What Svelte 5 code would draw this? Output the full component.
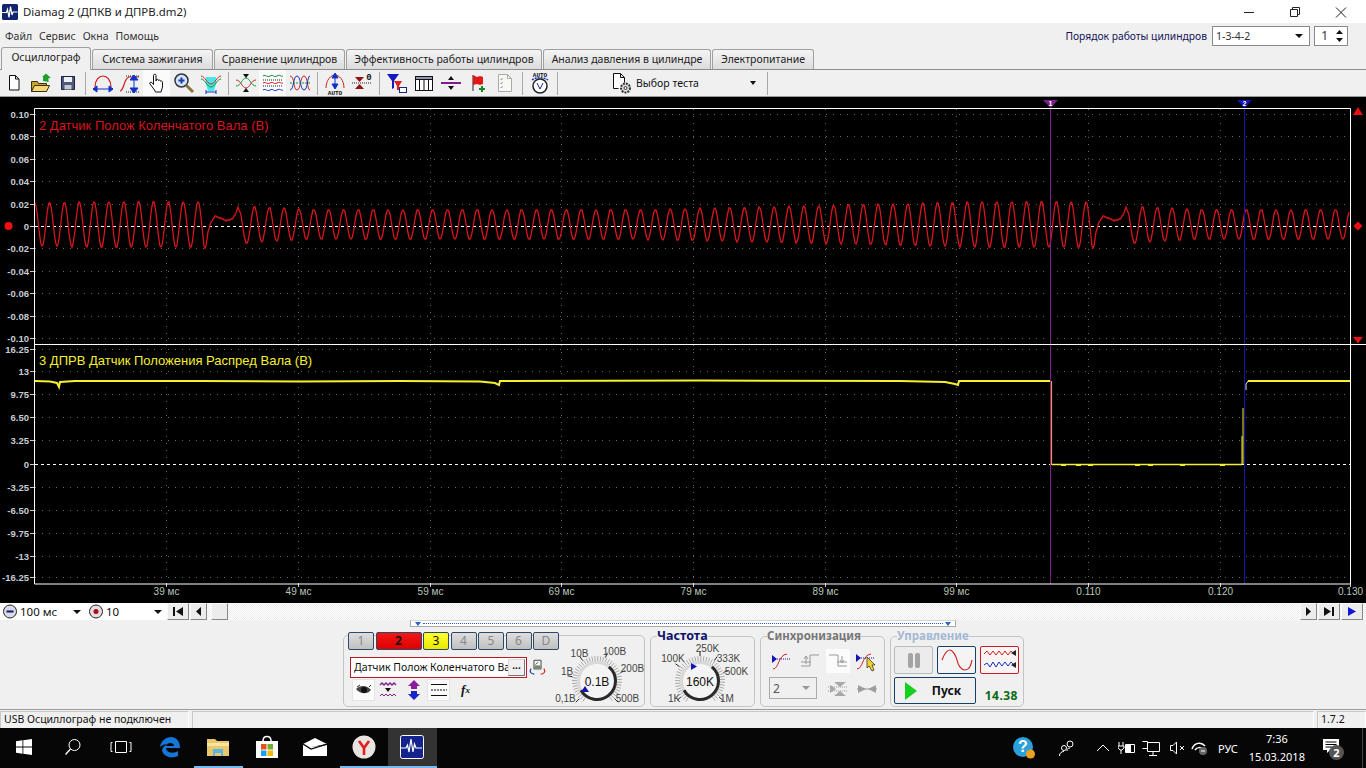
<script>
  const tabs = [
    { label: "Осциллограф", w: 90, active: true },
    { label: "Система зажигания", w: 121 },
    { label: "Сравнение цилиндров", w: 131 },
    { label: "Эффективность работы цилиндров", w: 196 },
    { label: "Анализ давления в цилиндре", w: 168 },
    { label: "Электропитание", w: 102 },
  ];
  const channels = [
    { t: "1", w: 26 }, { t: "2", w: 46, c: "red" }, { t: "3", w: 26, c: "yellow" },
    { t: "4", w: 26 }, { t: "5", w: 26 }, { t: "6", w: 26 }, { t: "D", w: 26 },
  ];

  const gridX = [166, 298, 430, 561, 693, 825, 956, 1088, 1220];
  const bottomLabels = ["39 мс", "49 мс", "59 мс", "69 мс", "79 мс", "89 мс", "99 мс", "0.110", "0.120", "0.130"];
  const upper = [
    ["0.10", 114], ["0.08", 136], ["0.06", 159], ["0.04", 181], ["0.02", 204], ["0", 226],
    ["-0.02", 248], ["-0.04", 271], ["-0.06", 293], ["-0.08", 316], ["-0.10", 338],
  ];
  const lower = [
    ["16.25", 349], ["13", 371], ["9.75", 394], ["6.50", 417], ["3.25", 440], ["0", 464],
    ["-3.25", 487], ["-6.50", 510], ["-9.75", 533], ["-13", 556], ["-16.25", 577],
  ];

  // hump between two crank teeth gaps
  const knots = [
    [0, 246], [1.5, 249], [4, 232], [7, 222], [11, 216], [16, 218], [22, 220.5], [28, 219],
    [32, 213], [34, 207], [37, 215], [40, 235], [43, 247],
  ];
  const cycle = 888;
  const clamp = (v) => Math.max(0, Math.min(1, v));

  function crank(x) {
    const u = (((x - 204) % cycle) + cycle) % cycle;
    if (u < 43) {
      let i = 0;
      while (knots[i + 1][0] < u) i++;
      const [a, ya] = knots[i];
      const [b, yb] = knots[i + 1];
      return ya + ((yb - ya) * (u - a)) / (b - a);
    }
    const p = u - 43;
    const amp = 15 + 8 * clamp((p - 400) / 350) + 3 * clamp(1 - p / 60);
    return 224.5 + amp * Math.cos((2 * Math.PI * p) / (845 / 56.9));
  }

  let redPts = "";
  for (let x = 35; x < 1350; x++) redPts += `${x},${Math.round(crank(x))} `;

  const yellowPts =
    "35,381 50,381.5 57,383 59,387 60,382 75,381 200,381 300,381.5 400,381 480,381.5 495,383 499,385 500,381 " +
    "700,380.5 900,381 945,382 955,384 958,385 959,381 1000,381 1051,381";

  const polar = (cx, cy, r, deg) => {
    const a = (deg * Math.PI) / 180;
    return [cx + r * Math.cos(a), cy + r * Math.sin(a)];
  };
  function hatch(cx, cy, r1, r2) {
    const out = [];
    for (let d = 125; d <= 415; d += 7) out.push([polar(cx, cy, r1, d), polar(cx, cy, r2, d)]);
    return out;
  }
  const arc = (cx, cy, r, a, b) => {
    const [x1, y1] = polar(cx, cy, r, a);
    const [x2, y2] = polar(cx, cy, r, b);
    return `M${x1} ${y1}A${r} ${r} 0 ${b - a > 180 ? 1 : 0} 1 ${x2} ${y2}`;
  };

  const voltLabels = [
    ["10В", 32.5, 18, 235], ["100В", 67.5, 16, 290], ["1В", 20, 36, 190],
    ["200В", 85.5, 33, 340], ["0,1В", 18.5, 63, 135], ["500В", 80.5, 63, 45],
  ];
  const freqLabels = [
    ["100K", 23, 23, 215], ["250K", 57.5, 13, 270], ["333K", 78.5, 23, 305],
    ["500K", 86.5, 36, 340], ["1K", 24, 63, 140], ["1M", 77, 63, 40],
  ];
</script>

{#snippet dial(labels, value, tri)}
  <svg class="dial" width="100" height="72" viewBox="0 0 100 72">
    {#each hatch(50, 46, 20, 25) as [a, b]}
      <line x1={a[0]} y1={a[1]} x2={b[0]} y2={b[1]} stroke="#a8a8a8" stroke-width="1" />
    {/each}
    {#each labels as [t, x, y, deg]}
      {@const p = polar(50, 46, 25, deg)}
      {@const q = polar(50, 46, 30, deg)}
      <line x1={p[0]} y1={p[1]} x2={q[0]} y2={q[1]} stroke="#222" />
      <text {x} y={y + 3.5} text-anchor="middle" class="dial-label">{t}</text>
    {/each}
    <circle cx="50" cy="46" r="18.5" fill="#f4f4f4" stroke="#d8d8d8" stroke-width="3" />
    <path d={arc(50, 46, 18.5, -50, 150)} fill="none" stroke="#2a2a2a" stroke-width="3" />
    <path d={tri} fill="#1414b4" />
    <text x="50" y="50.5" text-anchor="middle" class="dial-value">{value}</text>
  </svg>
{/snippet}

<div class="app">
  <header class="title">
    <svg class="logo" width="16" height="16" viewBox="0 0 16 16">
      <rect width="16" height="16" rx="1.5" fill="#12246e" />
      <path d="M0 8.500h4.500l1-3 1.500 8 1.500-11 1.500 8.500 1-3h4.500" fill="none" stroke="#fff" stroke-width="1.200" />
    </svg>
    <span class="title-text">Diamag 2 (ДПКВ и ДПРВ.dm2)</span>
    <div class="win-btns">
      <svg width="46" height="20" viewBox="0 0 46 20"><path d="M18 10.500h10" stroke="#222" /></svg>
      <svg width="46" height="20" viewBox="0 0 46 20"><path d="M18.500 7.500h7v7h-7zM20.500 7.500v-2h7v7h-2" fill="none" stroke="#222" /></svg>
      <svg width="46" height="20" viewBox="0 0 46 20"><path d="M18 5.500l10 10M28 5.500l-10 10" stroke="#222" /></svg>
    </div>
  </header>

  <div class="menu">
    <span>Файл</span><span>Сервис</span><span>Окна</span><span>Помощь</span>
    <div class="order">
      <span class="order-label">Порядок работы цилиндров</span>
      <div class="box order-select"><span>1-3-4-2</span><i class="caret"></i></div>
      <div class="box order-spin">
        <span>1</span>
        <svg width="9" height="14" viewBox="0 0 9 14"><path d="M1 5l3.500-4 3.500 4zM1 9l3.500 4 3.500-4z" fill="#111" /></svg>
      </div>
    </div>
  </div>

  <nav class="tabs">
    {#each tabs as tab}
      <div class="tab" class:active={tab.active} style="width:{tab.w}px">{tab.label}</div>
    {/each}
  </nav>

  <div class="toolbar">
    <div class="tool"><svg width="22" height="22" viewBox="0 0 22 22"><path d="M6.500 3.500h6l3.500 3.500v11h-9.500zM12.500 3.500v3.500h3.500" fill="#fff" stroke="#111" /></svg></div>
    <div class="tool"><svg width="24" height="22" viewBox="0 0 24 22"><path d="M2.500 9.500h6l1 2h8v8h-15z" fill="#c9a22e" stroke="#3a3010" /><path d="M2.500 19.500l3-6h15l-3 6z" fill="#f5d873" stroke="#3a3010" /><path d="M14 9V5h-1l4-3.500 5 4.500h-2.500v4z" fill="#1fa02c" /></svg></div>
    <div class="tool"><svg width="20" height="20" viewBox="0 0 20 20"><path d="M3.500 3.500h13v13h-13z" fill="#4d5a7c" stroke="#1b2038" /><path d="M6 4h8v5H6z" fill="#eef0f4" /><path d="M6.500 12h7v4.500h-7z" fill="#c4c8d0" /></svg></div>
    <i class="sep"></i>
    <div class="tool"><svg width="24" height="22" viewBox="0 0 24 22"><path d="M4 15c0-7 4-11 8-11s8 4 8 11" fill="none" stroke="#d01818" stroke-width="1.200" /><path d="M2 17h20M2 17l4-3v6zM22 17l-4-3v6z" fill="#1030c8" stroke="#1030c8" /></svg></div>
    <div class="tool"><svg width="24" height="22" viewBox="0 0 24 22"><path d="M2 19c4 0 4-13 9-14h10" fill="none" stroke="#d01818" stroke-width="1.200" stroke-dasharray="12 0" /><path d="M8 4h14M8 20h14" stroke="#222" stroke-dasharray="1 1" /><path d="M16 5v14M16 3l-4 5h8zM16 21l-4-5h8z" fill="#1030c8" stroke="#1030c8" /></svg></div>
    <div class="tool on"><svg width="22" height="24" viewBox="0 0 22 24"><path d="M8.500 19l-4.500-6c-.8-1.500 1-2.500 2-1.300l1.500 1.800V4.500c0-1.700 2.500-1.700 2.500 0V10l.5-1.500c1.500-.5 2 .2 2 1 1-.8 2-.3 2 .7 1-.5 2 .1 2 1V16l-1.500 5H9.500z" fill="#fff" stroke="#111" /></svg></div>
    <div class="tool"><svg width="24" height="24" viewBox="0 0 24 24"><circle cx="9.500" cy="9.500" r="6.500" fill="#d4e4f4" stroke="#334" stroke-width="1.500" /><path d="M6.500 9.500h6M9.500 6.500v6" stroke="#1a3cb0" stroke-width="2" /><path d="M14.500 14.500l6.500 6.500" stroke="#8a7238" stroke-width="3" /></svg></div>
    <div class="tool"><svg width="24" height="22" viewBox="0 0 24 22"><path d="M7 5h10v7l-2 7H9l-2-7z" fill="#48e8e8" /><path d="M2 4c4 0 6 8 10 8s6-8 10-8" fill="none" stroke="#d02020" /><path d="M2 7c4 0 6 8 10 8s6-8 10-8" fill="none" stroke="#108a30" /><path d="M7 20h10M7 18v4M17 18v4" stroke="#1030c8" /></svg></div>
    <i class="sep"></i>
    <div class="tool"><svg width="24" height="22" viewBox="0 0 24 22"><path d="M2 8c5 0 6 8 10 8s5-8 10-8" fill="none" stroke="#d02020" /><path d="M2 14c5 0 6-8 10-8s5 8 10 8" fill="none" stroke="#10a030" /><path d="M9 2h6l-3 4zM9 20h6l-3-4z" fill="#111" /></svg></div>
    <div class="tool on"><svg width="24" height="22" viewBox="0 0 24 22"><path d="M2 4c3-2 4 2 7 0s4 2 7 0 4 1 6 0" fill="none" stroke="#108a30" /><path d="M2 8h20" stroke="#222" stroke-dasharray="1 1" /><path d="M2 11c3-2 4 2 7 0s4 2 7 0 4 1 6 0" fill="none" stroke="#d02020" /><path d="M2 14h20" stroke="#222" stroke-dasharray="1 1" /><path d="M2 18c3-2 4 2 7 0s4 2 7 0 4 1 6 0" fill="none" stroke="#1030c8" /></svg></div>
    <div class="tool"><svg width="24" height="22" viewBox="0 0 24 22"><path d="M2 4c5 0 3 14 7 14s3-14 7-14 3 14 6 14" fill="none" stroke="#d02020" /><path d="M2 18c4 0 3-14 7-14s3 14 7 14 3-14 6-14" fill="none" stroke="#1030c8" /><path d="M2 11h20" stroke="#108a30" stroke-dasharray="2 1" /></svg></div>
    <i class="sep"></i>
    <div class="tool"><svg width="24" height="24" viewBox="0 0 24 24"><path d="M3 17c0-8 5-13 9-13s9 5 9 13" fill="none" stroke="#d02020" /><path d="M12 4v13M12 2l-3 5h6zM12 18l-3-5h6z" fill="#1030c8" stroke="#1030c8" /><text x="12" y="23.500" text-anchor="middle" class="mini">AUTO</text></svg></div>
    <div class="tool"><svg width="24" height="22" viewBox="0 0 24 22"><path d="M5 5h9l-4.500 5zM5 17h9l-4.500-5z" fill="#8c1414" /><path d="M2 11h20" stroke="#222" stroke-dasharray="1 1" /><text x="19" y="8" text-anchor="middle" class="zero">0</text></svg></div>
    <i class="sep"></i>
    <div class="tool"><svg width="24" height="22" viewBox="0 0 24 22"><path d="M2 2h12l-5 7v7l-2 1V9z" fill="#1418c0" /><path d="M9 9h8l-3 5v4h-2v-4z" fill="#e02020" /><rect x="14.500" y="15.500" width="7" height="5" fill="#fff" stroke="#1a2878" /></svg></div>
    <div class="tool"><svg width="22" height="20" viewBox="0 0 22 20"><rect x="2.500" y="3.500" width="17" height="14" fill="#fff" stroke="#111" /><path d="M2.500 6.500h17M6.500 3.500v14M11 3.500v14M15.500 3.500v14" stroke="#111" /><path d="M3 4h16v2H3z" fill="#9098b0" /></svg></div>
    <div class="tool"><svg width="22" height="20" viewBox="0 0 22 20"><path d="M1 10h20" stroke="#801c8c" stroke-width="2" /><path d="M8 7l3-4 3 4zM8 13l3 4 3-4z" fill="#111" /></svg></div>
    <div class="tool"><svg width="20" height="22" viewBox="0 0 20 22"><path d="M5 3v16" stroke="#222" /><path d="M5 3l4 2 3-1 3 1v7l-3 1-3-1-4 1z" fill="#e01818" /><path d="M13 14h2v2h2v2h-2v2h-2v-2h-2v-2h2z" fill="#0e8c28" /></svg></div>
    <div class="tool"><svg width="20" height="22" viewBox="0 0 20 22"><path d="M3.500 2.500h9l4 4v13h-13zM12.500 2.500v4h4" fill="#f8f8f4" stroke="#aaa" /><path d="M5.500 7l1 1 1-2M5.500 11l1 1 1-2M5.500 15l1 1 1-2" fill="none" stroke="#9a9a9a" /></svg></div>
    <i class="sep"></i>
    <div class="tool"><svg width="24" height="24" viewBox="0 0 24 24"><text x="12" y="6" text-anchor="middle" class="mini">AUTO</text><path d="M4 9c4-3 12-3 16 0" fill="none" stroke="#1030c8" stroke-width="1.500" stroke-dasharray="2 1" /><circle cx="12" cy="15" r="7" fill="#fff" stroke="#222" stroke-width="1.500" /><path d="M9 12l3 6 3-6" fill="none" stroke="#1a2878" /></svg></div>
    <i class="sep"></i>
    <div class="test">
      <svg width="22" height="22" viewBox="0 0 22 22"><path d="M7.500 16.500h-5v-15h7l4 4v5M9.500 1.500v4h4" fill="#fff" stroke="#111" /><circle cx="14.500" cy="16" r="4.500" fill="#ddd" stroke="#333" stroke-width="2" stroke-dasharray="2 1" /><circle cx="14.500" cy="16" r="1.500" fill="#fff" stroke="#333" /></svg>
      <span>Выбор теста</span>
      <i class="caret small"></i>
    </div>
    <i class="sep last"></i>
  </div>

  <svg class="scope" width="1366" height="506" viewBox="0 97 1366 506">
    {#each [upper, lower] as scale}
      {#each scale as [t, y]}
        <line x1="30" y1={y + 0.5} x2="34" y2={y + 0.5} stroke="#ccc" />
        <text x="29" y={y + 3.5} text-anchor="end" class="axis">{t}</text>
        {#if t === "0"}
          <line x1="35" y1={y + 0.5} x2="1350" y2={y + 0.5} stroke="#fff" stroke-dasharray="3 3" />
        {:else}
          <line x1="35" y1={y + 0.5} x2="1350" y2={y + 0.5} stroke="#666" stroke-dasharray="1 6" />
        {/if}
      {/each}
    {/each}

    {#each gridX as x}
      <line x1={x + 0.5} y1="109" x2={x + 0.5} y2="344" stroke="#666" stroke-dasharray="1 6" />
      <line x1={x + 0.5} y1="345" x2={x + 0.5} y2="583" stroke="#666" stroke-dasharray="1 6" />
    {/each}
    {#each [...gridX, 1350] as x, i}
      <line x1={x + 0.5} y1="583" x2={x + 0.5} y2="587" stroke="#ccc" />
      <text x={x + 0.5} y="594.500" text-anchor="middle" class="axis tick">{bottomLabels[i]}</text>
    {/each}

    <polyline points={redPts} fill="none" stroke="#d8141c" stroke-width="1.300" />
    <polyline points={yellowPts} fill="none" stroke="#f4f030" stroke-width="2" />
    <polyline points="1248,381 1350,381" fill="none" stroke="#f4f030" stroke-width="2" />
    <path d="M1246 390v-6l2-3" fill="none" stroke="#e8e8d0" />
    <polyline points="1052,464.500 1242,464.500" fill="none" stroke="#f4f030" stroke-width="1.500" />
    {#each [1061, 1076, 1088, 1135, 1148, 1180, 1220] as x}
      <rect {x} y="465" width="5" height="1" fill="#f4f030" />
    {/each}
    <path d="M1051.500 381v84" stroke="#f09a3c" stroke-width="1.200" />
    <path d="M1243 464v-56" stroke="#f4f030" stroke-width="1" />
    <path d="M1242 464v-28" stroke="#f4f030" stroke-width="1" />

    <path d="M1050.500 103v481" stroke="#7a1f84" />
    <path d="M1244.500 103v481" stroke="#1212b0" />
    <path d="M1043 100h15l-7.500 8z" fill="#7a1f84" />
    <path d="M1237 100h15l-7.500 8z" fill="#1212b0" />
    <text x="1050.500" y="106" text-anchor="middle" class="cursor">1</text>
    <text x="1244.500" y="106" text-anchor="middle" class="cursor">2</text>

    <path d="M34.500 584V108.500H1350.500V584H34.500M35 344.500H1366" fill="none" stroke="#fff" />

    <text x="39" y="129.500" class="trace red">2 Датчик Полож Коленчатого Вала (В)</text>
    <text x="39" y="364.500" class="trace yellow">3 ДПРВ Датчик Положения Распред Вала (В)</text>

    <circle cx="8.500" cy="226" r="4" fill="#f01010" />
    <path d="M1358 107l5 8h-10zM1353 337h10l-5 6.500zM1358 221.500l4.500 4.500-4.500 4.500-4.500-4.500z" fill="#e81010" />
  </svg>

  <div class="nav">
    <div class="roll">
      <svg width="16" height="15" viewBox="0 0 16 15"><circle cx="8" cy="7.500" r="6.500" fill="#d8dce8" stroke="#222" /><path d="M4.500 7.500h7" stroke="#141470" stroke-width="2" /></svg>
      <span class="val">100 мс</span><i class="caret"></i>
    </div>
    <div class="roll two">
      <svg width="16" height="15" viewBox="0 0 16 15"><circle cx="8" cy="7.500" r="6.500" fill="#e8dcdc" stroke="#222" /><circle cx="8" cy="7.500" r="2.500" fill="#a01020" /></svg>
      <span class="val">10</span><i class="caret"></i>
    </div>
    <div class="sbtn w22"><svg width="12" height="9" viewBox="0 0 12 9"><path d="M1 0h2v9H1zM11 0v9L4 4.500z" fill="#111" /></svg></div>
    <div class="sbtn"><svg width="7" height="9" viewBox="0 0 7 9"><path d="M6 0v9L1 4.500z" fill="#111" /></svg></div>
    <div class="sbtn thumb"></div>
    <div class="sbtn right"><svg width="7" height="9" viewBox="0 0 7 9"><path d="M1 0v9l5-4.500z" fill="#111" /></svg></div>
    <div class="sbtn w22"><svg width="12" height="9" viewBox="0 0 12 9"><path d="M11 0H9v9h2zM1 0v9l7-4.500z" fill="#111" /></svg></div>
    <div class="sbtn w22"><svg width="10" height="9" viewBox="0 0 10 9"><path d="M1 0v9l8-4.500z" fill="#1414d8" /></svg></div>
  </div>

  <section class="panel">
    <div class="strip"><i class="mark"></i><i class="dots"></i><i class="mark"></i></div>
    <div class="groups">
      <div class="group chan">
        <div class="chan-left">
          <div class="chan-btns">
            {#each channels as c}
              <div class="chan-btn {c.c ?? ''}" style="width:{c.w}px">{c.t}</div>
            {/each}
          </div>
          <div class="chan-name">
            <div class="name-box"><span>Датчик Полож Коленчатого Ва</span><b>...</b></div>
            <svg width="24" height="24" viewBox="0 0 24 24"><path d="M7.500 3.500h9v11h-9z" fill="#f4f4f4" stroke="#222" /><path d="M8 10h8v4H8z" fill="#6c8a70" /><path d="M9.500 9l3-3" stroke="#222" /><path d="M4 14c-3 4 0 7 4 7" fill="none" stroke="#1430b0" stroke-width="1.400" /><path d="M20 14c3 4 0 7-4 7" fill="none" stroke="#d02020" stroke-width="1.400" /></svg>
          </div>
          <div class="chan-tools">
            <div class="ct on"><svg width="18" height="14" viewBox="0 0 18 14"><path d="M1 6c4-4 11-4 15 1-3 4-10 5-15-1z" fill="#444" /><circle cx="9" cy="7" r="3" fill="#111" /><path d="M2 4l3-2M14 4l2-2" stroke="#333" /></svg></div>
            <div class="ct w25"><svg width="20" height="20" viewBox="0 0 20 20"><path d="M2 5l2-2 2 2 2-2 2 2 2-2 2 2 2-2 2 2" fill="none" stroke="#801c8c" stroke-width="1.300" /><path d="M2 16l2-2 2 2 2-2 2 2 2-2 2 2 2-2 2 2" fill="none" stroke="#801c8c" /><path d="M7 8h6l-3 4z" fill="#111" /></svg></div>
            <div class="ct w25"><svg width="18" height="22" viewBox="0 0 18 22"><path d="M9 1l6 6h-3v3H6V7H3z" fill="#8c1ca0" /><path d="M9 21l6-6h-3v-3H6v3H3z" fill="#1c24c8" /></svg></div>
            <div class="ct on"><svg width="20" height="16" viewBox="0 0 20 16"><path d="M2 2.500h16M2 13.500h16" stroke="#111" /><path d="M2 8h16" stroke="#111" stroke-dasharray="2 1" /></svg></div>
            <div class="ct fx"><i>f</i><i class="x">x</i></div>
          </div>
        </div>
        {@render dial(voltLabels, "0.1В", "M38 51l-4 6h8z")}
      </div>

      <fieldset class="group freq">
        <legend class="navy">Частота</legend>
        {@render dial(freqLabels, "160K", "M41 28l6 3.500-6 3.500z")}
      </fieldset>

      <fieldset class="group sync">
        <legend class="grey">Синхронизация</legend>
        <div class="sync-grid">
          <div class="st"><svg width="22" height="20" viewBox="0 0 22 20"><path d="M3 18c6 0 5-14 14-15" fill="none" stroke="#d02020" /><path d="M7 8h14" stroke="#1414b4" stroke-dasharray="1 1" /><path d="M2 4v8l5-4z" fill="#1414b4" /></svg></div>
          <div class="st"><svg width="22" height="20" viewBox="0 0 22 20"><path d="M2 15h9V4h9" fill="none" stroke="#999" /><path d="M9 8l-2-3-2 3M7 5v8M2 11h10" fill="none" stroke="#999" /></svg></div>
          <div class="st on"><svg width="22" height="20" viewBox="0 0 22 20"><path d="M2 4h9v11h9" fill="none" stroke="#999" /><path d="M13 9l2 3 2-3M15 5v7M10 11h10" fill="none" stroke="#999" /></svg></div>
          <div class="st cursor-on"><svg width="24" height="24" viewBox="0 0 24 24"><path d="M2 20c6 0 5-14 14-15" fill="none" stroke="#d02020" /><path d="M6 9h14" stroke="#1414b4" stroke-dasharray="1 1" /><path d="M1 5v8l5-4z" fill="#1414b4" /><path d="M12 8l8 8h-3l2 5-2 1-3-5-2 2z" fill="#f0d030" stroke="#222" stroke-width=".7" /></svg></div>
          <div class="box sync-select"><span>2</span><i class="caret grey-caret"></i></div>
          <div class="st span"><svg width="22" height="20" viewBox="0 0 22 20"><path d="M3 6l6 4-6 4zM7 3h12l-6 5zM7 17h12l-6-5z" fill="#a8a8a8" /><path d="M1 8h20M1 12h20" stroke="#999" stroke-dasharray="1 1" /></svg></div>
          <div class="st"><svg width="22" height="20" viewBox="0 0 22 20"><path d="M2 6l8 4-8 4zM20 6l-8 4 8 4z" fill="#a0a0a0" /><path d="M1 10h20" stroke="#999" /></svg></div>
        </div>
      </fieldset>

      <fieldset class="group ctrl">
        <legend class="pale">Управление</legend>
        <div class="ctrl-grid">
          <div class="cb pause"><i></i><i></i></div>
          <div class="cb sel"><svg width="34" height="24" viewBox="0 0 34 24"><path d="M2 12c3-8 6-10 8-10s6 5 7 10 4 10 8 10 6-4 7-10" fill="none" stroke="#d02020" stroke-width="1.200" /></svg></div>
          <div class="cb red"><svg width="36" height="26" viewBox="0 0 36 26"><path d="M2 7l3-3 3 4 3-4 3 4 3-4 3 4 3-4 3 4 3-4 3 3" fill="none" stroke="#d02020" /><path d="M2 18l3-2 3 4 3-5 3 5 3-5 3 4 3-4 3 4 3-4 3 3" fill="none" stroke="#1030c8" /><path d="M29 6l5-3v6zM29 18l5-3v6z" fill="#222" /></svg></div>
          <div class="cb go"><svg width="14" height="20" viewBox="0 0 14 20"><path d="M1 1v18l12-9z" fill="#16d020" /></svg><b>Пуск</b></div>
          <div class="clock">14.38</div>
        </div>
      </fieldset>
    </div>
  </section>

  <footer class="status">
    <div class="cell first">USB Осциллограф не подключен</div>
    <div class="cell grow"></div>
    <div class="cell ver">1.7.2</div>
  </footer>

  <div class="taskbar">
    <div class="task"><svg width="16" height="16" viewBox="0 0 16 16"><path d="M0 2.200l6.500-.9v6.300H0zM7.300 1.200L16 0v7.600H7.300zM0 8.400h6.500v6.300L0 13.800zM7.300 8.400H16V16l-8.700-1.200z" fill="#fff" /></svg></div>
    <div class="task"><svg width="18" height="18" viewBox="0 0 18 18"><circle cx="10.500" cy="7" r="5.500" fill="none" stroke="#fff" /><path d="M6.500 11l-5 5.500" stroke="#fff" stroke-width="1.300" /></svg></div>
    <div class="task"><svg width="22" height="14" viewBox="0 0 22 14"><path d="M5.500 1.500h11v11h-11zM2.500 2.500H1v9h1.500M19.500 2.500H21v9h-1.500" fill="none" stroke="#fff" /></svg></div>
    <div class="task open"><svg width="22" height="22" viewBox="0 0 22 22"><path d="M1 11C2 4 8 1 12 1c6 0 9 5 9 11H7c0 5 8 6 12 3v5c-6 3-15 1-16-6 1-3 3-5 6-6-3 0-6 1-8 3zm6-1h8c0-4-7-4-8 0z" fill="#1576d8" /></svg></div>
    <div class="task open active-line"><svg width="22" height="19" viewBox="0 0 22 19"><path d="M0 1h8l2 2h12v15H0z" fill="#e8c86a" /><path d="M0 5h22v3H0z" fill="#f6e4a0" /><path d="M6 11h10v7h-2v-3H8v3H6z" fill="#5cb4e4" /></svg></div>
    <div class="task open"><svg width="24" height="24" viewBox="0 0 24 24"><path d="M1 6h22v17H1z" fill="#fff" /><path d="M8 6c0-6 8-6 8 0" fill="none" stroke="#fff" stroke-width="1.500" /><rect x="6" y="9" width="5.500" height="5.500" fill="#e85020" /><rect x="12.500" y="9" width="5.500" height="5.500" fill="#70b030" /><rect x="6" y="15.500" width="5.500" height="5.500" fill="#20a0e8" /><rect x="12.500" y="15.500" width="5.500" height="5.500" fill="#f8b800" /></svg></div>
    <div class="task open"><svg width="24" height="18" viewBox="0 0 24 18"><path d="M0 6L12 0l12 6-16 3L24 7v11H0z" fill="#fff" /><path d="M0 6l8 5 16-5" fill="none" stroke="#000" stroke-width="1.200" /></svg></div>
    <div class="task open active-line"><svg width="24" height="24" viewBox="0 0 24 24"><circle cx="12" cy="12" r="11.500" fill="#e8e4e0" /><path d="M7 6l5 7 5-7M12 13v7" fill="none" stroke="#e02020" stroke-width="2.600" /></svg></div>
    <div class="task open active-line current"><svg width="24" height="24" viewBox="0 0 24 24"><rect x=".5" y=".5" width="23" height="23" rx="2" fill="#14248c" stroke="#fff" /><path d="M1 13h5l1.500-3 1.500 7 2-13 2 13 1.500-8 1.500 4h6" fill="none" stroke="#fff" stroke-width="1.200" /></svg></div>

    <div class="tray">
      <svg class="t-help" width="24" height="24" viewBox="0 0 24 24"><circle cx="11" cy="11" r="10" fill="#2aa0dc" /><text x="11" y="16" text-anchor="middle" class="help">?</text><circle cx="18.500" cy="18" r="4.500" fill="#f0a020" /></svg>
      <svg class="t-people" width="18" height="18" viewBox="0 0 18 18"><circle cx="12" cy="5" r="3" fill="none" stroke="#fff" /><circle cx="6" cy="9" r="2.500" fill="none" stroke="#fff" /><path d="M1.500 17c0-3 2-4.500 4.500-4.500M9 12c0-2 1-3 3-3" fill="none" stroke="#fff" /></svg>
      <svg class="t-chev" width="14" height="8" viewBox="0 0 14 8"><path d="M1 7l6-6 6 6" fill="none" stroke="#fff" /></svg>
      <svg class="t-pow" width="18" height="14" viewBox="0 0 18 14"><path d="M1 1v4M5 1v4M0 5h6v2l-2 2H2L0 7zM3 9v4" fill="none" stroke="#fff" /><path d="M7.500 3.500h9v8h-9z" fill="none" stroke="#fff" /><path d="M8 4h5v7H8z" fill="#fff" /></svg>
      <svg class="t-net" width="18" height="16" viewBox="0 0 18 16"><path d="M.5 1.500h5v7h-5M5.500 2.500h12v9h-12zM11 12v3M7 15.500h8" fill="none" stroke="#fff" /></svg>
      <svg class="t-vol" width="16" height="14" viewBox="0 0 16 14"><path d="M.5 4.500h2.500l3.500-3.500v12L3 9.500H.500z" fill="none" stroke="#fff" /><path d="M10 5l4 4M14 5l-4 4" stroke="#fff" /></svg>
      <svg class="t-cloud" width="18" height="14" viewBox="0 0 18 14"><path d="M1 8c2-6 9-8 13-3" fill="none" stroke="#fff" stroke-width="1.500" /><path d="M4 9c2-3 6-3 8-1" fill="none" stroke="#fff" stroke-width="1.500" /><circle cx="12" cy="10" r="4" fill="#666" /><path d="M10 10h4" stroke="#fff" /></svg>
      <span class="lang">РУС</span>
      <div class="time"><span>7:36</span><span>15.03.2018</span></div>
      <div class="notif">
        <svg width="18" height="16" viewBox="0 0 18 16"><path d="M1 1h16v11H8l-3 3v-3H1z" fill="#fff" /><path d="M3.500 4h11M3.500 6.500h11M3.500 9h7" stroke="#000" /></svg>
        <span class="badge">2</span>
      </div>
      <i class="show-desktop"></i>
    </div>
  </div>
</div>

<style>
  :global(body) {
    margin: 0;
    background: #f0f0f0;
  }

  .app {
    width: 1366px;
    height: 768px;
    overflow: hidden;
    display: flex;
    flex-direction: column;
    font: 10.5px "Noto Sans", "Liberation Sans", sans-serif;
    color: #111;
    background: #f0f0f0;
  }

  /* title bar */
  .title {
    height: 23px;
    flex: none;
    background: #fff;
    display: flex;
    align-items: center;
    padding-left: 2px;
    box-sizing: border-box;
  }
  .logo {
    margin-top: 1px;
  }
  .title-text {
    margin-left: 5px;
    font-size: 11.400px;
    color: #222;
  }
  .win-btns {
    margin-left: auto;
    display: flex;
    gap: 0;
    margin-right: 2px;
  }

  /* menu */
  .menu {
    height: 26px;
    flex: none;
    display: flex;
    gap: 7px;
    padding: 3px 0 0 5px;
    box-sizing: border-box;
    align-items: flex-start;
    line-height: 20px;
    color: #333;
  }
  .order {
    margin-left: auto;
    margin-right: 18px;
    display: flex;
    align-items: center;
    gap: 4px;
  }
  .order-label {
    color: #14145a;
    margin-right: 1px;
    font-size: 10.300px;
  }
  .box {
    box-sizing: border-box;
    height: 20px;
    background: #fff;
    border: 1px solid #8a8a8a;
    display: flex;
    align-items: center;
    padding-left: 3px;
  }
  .order-select {
    width: 98px;
  }
  .order-select span {
    flex: 1;
  }
  .order-spin {
    width: 34px;
    font-size: 12px;
    justify-content: space-around;
  }
  .caret {
    display: block;
    border: 4px solid transparent;
    border-top: 4px solid #111;
    border-bottom: 0;
    margin-right: 6px;
  }
  .caret.small {
    border-width: 3px;
    border-top-width: 4px;
    border-bottom: 0;
  }

  /* tabs */
  .tabs {
    height: 21px;
    flex: none;
    display: flex;
    gap: 1px;
    padding-left: 1px;
    box-sizing: border-box;
    border-bottom: 1px solid #8c8c8c;
  }
  .tab {
    box-sizing: border-box;
    height: 20px;
    border: 1px solid #a0a0a0;
    border-bottom: 0;
    border-radius: 3px 3px 0 0;
    background: linear-gradient(#f4f4f4, #dcdcdc);
    text-align: center;
    line-height: 18px;
    white-space: nowrap;
    color: #222;
  }
  .tab.active {
    height: 23px;
    margin-top: -2px;
    background: #f0f0f0;
    position: relative;
    line-height: 19px;
  }

  /* toolbar */
  .toolbar {
    height: 27px;
    flex: none;
    display: flex;
    align-items: center;
    box-sizing: border-box;
    border-bottom: 1px solid #999;
  }
  .tool {
    width: 27px;
    height: 26px;
    flex: none;
    display: flex;
    align-items: center;
    justify-content: center;
  }
  .tool.on {
    background: #fbfbfb;
  }
  .sep {
    width: 1px;
    height: 23px;
    background: #a8a8a8;
    margin: 0 3px 0 4px;
    flex: none;
  }
  .sep.last {
    margin-right: 0;
  }
  .test {
    width: 202px;
    flex: none;
    display: flex;
    align-items: center;
    padding-left: 50px;
    box-sizing: border-box;
    gap: 3px;
  }
  .test span {
    flex: 1;
  }
  .test .caret {
    margin-right: 7px;
  }

  /* scope */
  .scope {
    display: block;
    flex: none;
    background: #000;
  }
  .scope text {
    font-family: "Liberation Sans", sans-serif;
  }
  .axis {
    fill: #c4ccd4;
    font-size: 9.5px;
    font-weight: 700;
  }
  .axis.tick {
    font-weight: 400;
    fill: #b8c8b4;
    font-size: 10px;
  }
  .trace {
    font-size: 13px;
  }
  .trace.red {
    fill: #d8141c;
  }
  .trace.yellow {
    fill: #f4f030;
  }
  .cursor {
    fill: #fff;
    font-size: 7px;
    font-weight: 700;
  }

  /* time navigation */
  .nav {
    height: 17px;
    flex: none;
    display: flex;
    align-items: stretch;
    padding-right: 2px;
    background: repeating-conic-gradient(#ececec 0 25%, #fff 0 50%) 0 0 / 2px 2px;
  }
  .roll {
    width: 86px;
    background: #fff;
    display: flex;
    align-items: center;
    padding-left: 2px;
    box-sizing: border-box;
    font-size: 11.500px;
  }
  .roll.two {
    width: 81px;
  }
  .roll .val {
    flex: 1;
    margin-left: 2px;
  }
  .roll .caret {
    margin-right: 5px;
  }
  .sbtn {
    width: 17px;
    box-sizing: border-box;
    margin-right: 1px;
    background: #ececec;
    border: 1px solid;
    border-color: #fafafa #888 #888 #fafafa;
    display: flex;
    align-items: center;
    justify-content: center;
  }
  .sbtn.w22 {
    width: 22px;
  }
  .sbtn.thumb {
    margin-left: 3px;
  }
  .sbtn.right {
    margin-left: auto;
  }

  /* control panel */
  .panel {
    height: 90px;
    flex: none;
    box-sizing: border-box;
    border-bottom: 1px solid #9a9a9a;
  }
  .strip {
    width: 546px;
    height: 7px;
    margin-left: 410px;
    box-sizing: border-box;
    border: 1px solid #a8a8a8;
    border-top-color: #d8d8d8;
    background: #fff;
    display: flex;
    align-items: center;
    padding: 0 4px;
    gap: 2px;
  }
  .mark {
    display: block;
    border: 3.500px solid transparent;
    border-top: 4px solid #2a62c8;
    border-bottom: 0;
    flex: none;
  }
  .dots {
    flex: 1;
    border-top: 1px dotted #2a5cc0;
  }
  .groups {
    display: flex;
    gap: 5px;
    padding-left: 343px;
    padding-top: 6px;
    align-items: flex-start;
  }
  .group {
    margin: 0;
    padding: 0;
    box-sizing: border-box;
    border: 1px solid #c4c4c4;
    border-radius: 5px;
    height: 72px;
    min-inline-size: 0;
  }
  fieldset.group {
    margin-top: -3px;
    height: 77px;
  }
  legend {
    padding: 0;
    margin-left: 6px;
    font-size: 11.500px;
    font-weight: 700;
    line-height: 12px;
  }
  .navy {
    color: #10106c;
    font-size: 12.500px;
  }
  .grey {
    color: #777;
  }
  .pale {
    color: #a4b8d4;
  }

  .chan {
    width: 302px;
    margin-top: 2px;
    display: flex;
    position: relative;
  }
  .chan-left {
    width: 203px;
    flex: none;
  }
  .chan > .dial {
    margin-top: -1px;
  }
  .chan-btns {
    display: flex;
    gap: 1.500px;
    margin: -4px 0 0 4px;
  }
  .chan-btn {
    box-sizing: border-box;
    height: 18px;
    flex: none;
    border: 1px solid #2c4a68;
    border-radius: 2px;
    background: linear-gradient(#dedede, #c0c0c0);
    text-align: center;
    font-size: 12px;
    line-height: 16px;
    color: #888;
  }
  .chan-btn.red {
    background: linear-gradient(#f01818, #e00000);
    color: #111;
    font-weight: 700;
  }
  .chan-btn.yellow {
    background: linear-gradient(#ffff30, #e8e800);
    color: #111;
  }
  .chan-name {
    display: flex;
    align-items: center;
    margin: 5px 0 0 6px;
    gap: 1px;
  }
  .name-box {
    box-sizing: border-box;
    width: 177px;
    height: 21px;
    flex: none;
    background: #fff;
    border: 1px solid #b81c28;
    display: flex;
    align-items: center;
    padding: 0 1px 0 3px;
    overflow: hidden;
    white-space: nowrap;
  }
  .name-box span {
    flex: 1;
    overflow: hidden;
  }
  .name-box b {
    flex: none;
    width: 17px;
    height: 17px;
    background: #f0f0f0;
    border: 1px solid;
    border-color: #ddd #777 #777 #ddd;
    box-sizing: border-box;
    text-align: center;
    line-height: 11px;
    font-size: 10px;
  }
  .chan-tools {
    display: flex;
    align-items: center;
    margin: 0 0 0 8px;
    height: 22px;
  }
  .ct {
    width: 23px;
    height: 22px;
    display: flex;
    align-items: center;
    justify-content: center;
    flex: none;
  }
  .ct.w25 {
    width: 26px;
  }
  .ct.on {
    background: #fbfbfb;
    box-shadow: inset 0 0 0 1px #e4e4e4;
  }
  .ct.fx {
    font: italic 700 13px "Liberation Serif", serif;
    margin-left: 4px;
  }
  .ct.fx .x {
    font-size: 9px;
  }
  .dial {
    flex: none;
  }
  .dial-label {
    font-size: 10px;
    fill: #444;
    font-family: "Liberation Sans", sans-serif;
  }
  .dial-value {
    font-size: 12px;
    fill: #111;
    font-family: "Liberation Sans", sans-serif;
  }
  .mini {
    font: 700 6px "Liberation Mono", monospace;
    fill: #111;
  }
  .zero {
    font: 700 9px "Liberation Mono", monospace;
    fill: #111;
  }
  .help {
    font: 700 16px "Liberation Sans", sans-serif;
    fill: #fff;
  }

  .freq {
    width: 105px;
  }
  .freq .dial {
    display: block;
    margin: -7px 0 0 -1px;
  }

  .sync {
    width: 125px;
  }
  .sync-grid {
    display: grid;
    grid-template-columns: 24px 24px 24px 24px;
    grid-auto-rows: 24px;
    column-gap: 4.500px;
    row-gap: 4px;
    padding: 7px 0 0 8px;
  }
  .st {
    display: flex;
    align-items: center;
    justify-content: center;
  }
  .st.on {
    background: #fbfbfb;
  }
  .sync-select {
    grid-column: span 2;
    width: 48px;
    height: 22px;
    border-color: #aaa;
    background: #f0f0f0;
    color: #555;
    font-size: 12px;
    justify-content: space-between;
  }
  .grey-caret {
    border-top-color: #999;
  }

  .ctrl {
    width: 134px;
  }
  .ctrl-grid {
    display: grid;
    grid-template-columns: 39px 39px 39px;
    gap: 3px 4px;
    padding: 4px 0 0 3px;
  }
  .cb {
    box-sizing: border-box;
    height: 28px;
    border: 1px solid #bbb;
    border-radius: 2px;
    display: flex;
    align-items: center;
    justify-content: center;
    background: #ececec;
  }
  .cb.pause {
    gap: 2px;
  }
  .cb.pause i {
    display: block;
    width: 5px;
    height: 15px;
    background: #a4a4a4;
    border-radius: 2px;
  }
  .cb.sel {
    border-color: #16406c;
    background: #f4f4f4;
  }
  .cb.red {
    border-color: #c81c28;
    background: #f8f4f4;
  }
  .cb.go {
    grid-column: span 2;
    height: 27px;
    border-color: #16406c;
    background: #f0f0f0;
    justify-content: flex-start;
    padding-left: 9px;
  }
  .cb.go b {
    flex: 1;
    text-align: center;
    font-size: 12px;
  }
  .clock {
    color: #0c6a14;
    font-weight: 700;
    font-size: 12px;
    letter-spacing: 0.5px;
    align-self: end;
    text-align: right;
    padding-right: 1px;
    line-height: 16px;
  }

  /* status bar */
  .status {
    height: 18px;
    flex: none;
    display: flex;
    padding-top: 1px;
    gap: 3px;
    box-sizing: border-box;
  }
  .cell {
    box-sizing: border-box;
    border: 1px solid #c8c8c8;
    border-bottom: 0;
    border-right-color: #fff;
    line-height: 15px;
    padding-left: 3px;
    white-space: nowrap;
  }
  .cell.first {
    width: 189px;
  }
  .cell.grow {
    flex: 1;
  }
  .cell.ver {
    width: 49px;
  }

  /* windows taskbar */
  .taskbar {
    height: 40px;
    flex: none;
    background: #060606;
    display: flex;
    color: #fff;
  }
  .task {
    width: 48.500px;
    height: 40px;
    box-sizing: border-box;
    flex: none;
    display: flex;
    align-items: center;
    justify-content: center;
    border-bottom: 2px solid transparent;
  }
  .active-line {
    border-bottom-color: #76b9ed;
  }
  .current {
    background: #333;
  }
  .tray {
    flex: 1;
    display: flex;
    align-items: center;
    position: relative;
  }
  .t-help {
    margin-left: 575.500px;
  }
  .t-people {
    margin-left: 22px;
  }
  .t-chev {
    margin-left: 20px;
  }
  .t-pow {
    margin-left: 8px;
  }
  .t-net {
    margin-left: 6px;
  }
  .t-vol {
    margin-left: 10px;
  }
  .t-cloud {
    margin-left: 5px;
  }
  .lang {
    margin-left: 9px;
    font-size: 11px;
  }
  .time {
    margin-left: 7px;
    width: 64px;
    display: flex;
    flex-direction: column;
    align-items: center;
    line-height: 18px;
    font-size: 11px;
  }
  .notif {
    margin-left: 13px;
    position: relative;
    width: 18px;
    height: 16px;
    margin-top: -4px;
  }
  .badge {
    position: absolute;
    left: 7px;
    top: 7px;
    width: 15px;
    height: 15px;
    border-radius: 50%;
    background: #555;
    font-weight: 700;
    text-align: center;
    line-height: 15px;
    font-size: 11px;
  }
  .show-desktop {
    position: absolute;
    right: 3px;
    top: 0;
    width: 1px;
    height: 40px;
    background: #444;
  }
</style>
